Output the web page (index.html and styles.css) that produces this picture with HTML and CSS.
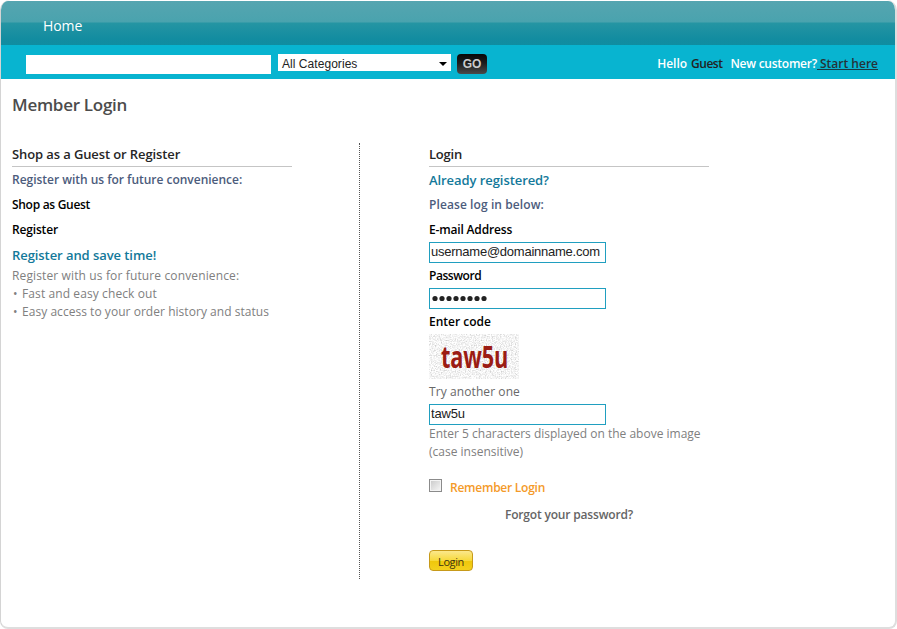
FILE: index.html
```
<!DOCTYPE html>
<html lang="en">
<head>
<meta charset="utf-8">
<title>Member Login</title>
<link rel="stylesheet" href="styles.css">
</head>
<body>
<div class="page">
  <header class="nav"><a class="home">Home</a></header>
  <div class="searchbar">
    <input class="search" type="text" aria-label="Search">
    <div class="category"><span>All Categories</span><svg width="8" height="4" viewBox="0 0 8 4"><path d="M0 0h8L4 4z" fill="#000"/></svg></div>
    <button class="go">GO</button>
    <div class="greeting"><span class="hello">Hello</span><span class="guest">Guest</span><span class="new">New customer?</span><a class="start">&nbsp;Start here</a></div>
  </div>
  <main>
    <h1>Member Login</h1>
    <div class="columns">
      <section class="left">
        <h2>Shop as a Guest or Register</h2>
        <p class="intro">Register with us for future convenience:</p>
        <a class="option shop">Shop as Guest</a>
        <a class="option reg">Register</a>
        <h3 class="save">Register and save time!</h3>
        <p class="note conv">Register with us for future convenience:</p>
        <ul>
          <li class="note fast">Fast and easy check out</li>
          <li class="note easy">Easy access to your order history and status</li>
        </ul>
      </section>
      <form class="right">
        <h2 class="login-title">Login</h2>
        <h3 class="already">Already registered?</h3>
        <p class="intro below">Please log in below:</p>
        <label class="email">E-mail Address</label>
        <input class="field user" type="text" value="username@domainname.com">
        <label class="pass">Password</label>
        <div class="field dots"><svg width="56" height="7" viewBox="0 0 56 7"><g fill="#222"><circle cx="3" cy="3.5" r="2.6"/><circle cx="10" cy="3.5" r="2.6"/><circle cx="17" cy="3.5" r="2.6"/><circle cx="24" cy="3.5" r="2.6"/><circle cx="31" cy="3.5" r="2.6"/><circle cx="38" cy="3.5" r="2.6"/><circle cx="45" cy="3.5" r="2.6"/><circle cx="52" cy="3.5" r="2.6"/></g></svg></div>
        <label class="code">Enter code</label>
        <div class="captcha">
          <svg width="90" height="45" viewBox="0 0 90 45">
            <filter id="noise" x="0" y="0" width="100%" height="100%"><feTurbulence type="fractalNoise" baseFrequency="0.8" numOctaves="2" seed="4"/><feColorMatrix values="0.8 0 0 0 0.5  0.8 0 0 0 0.5  0.8 0 0 0 0.5  0 0 0 0 1"/></filter>
            <rect width="90" height="45" filter="url(#noise)"/>
          </svg>
          <span>taw5u</span>
        </div>
        <a class="another">Try another one</a>
        <input class="field" type="text" value="taw5u">
        <p class="note hint">Enter 5 characters displayed on the above image<br>(case insensitive)</p>
        <div class="remember"><span class="box"></span><span class="label">Remember Login</span></div>
        <a class="forgot">Forgot your password?</a>
        <button class="submit" type="button">Login</button>
      </form>
    </div>
  </main>
</div>
</body>
</html>
```
FILE: styles.css
```
* { box-sizing: border-box; }
body { margin: 0; background: #fff; font: 12px/18px "Open Sans", sans-serif; color: #808080; }
h1, h2, h3, p, ul { margin: 0; padding: 0; font-size: inherit; }
.page { width: 897px; height: 629px; padding-top: 1px; border: solid #dedede; border-width: 0 2px 2px 1px; border-left-color: #d4d4d4; border-radius: 10px 10px 8px 8px; overflow: hidden; }
.nav { height: 44px; margin: 0 -1px; padding: 16px 0 0 43px; border-radius: 8px 8px 0 0; background: linear-gradient(#55a5b0 0, #4aa3ae 21px, #2595a3 22px, #128ca0 38px, #0f8da1); }
.home { display: block; color: #fff; font-size: 14px; letter-spacing: -0.1px; }
.searchbar { display: flex; align-items: flex-start; height: 34px; margin: 0 -1px; padding: 9px 18px 0 26px; background: #08b4d0; }
.search { width: 245px; height: 19px; margin-top: 1px; padding: 0; border: 0; background: #fff; }
.category { display: flex; align-items: center; justify-content: space-between; width: 173px; height: 17px; margin: 0 6px 0 7px; padding: 2px 4px 0 4px; background: #fff; color: #222; font: 12px "Liberation Sans", sans-serif; letter-spacing: 0.05px; }
.go { width: 30px; height: 20px; padding: 0; border: 0; border-radius: 4px; background: linear-gradient(#080808 0, #1c1c1c 45%, #4a4a4a); color: #ccc; font: bold 12px/21px "Liberation Sans", sans-serif; }
.greeting { display: flex; margin: 1px 0 0 auto; color: #fff; font-weight: 600; white-space: pre; }
.hello { margin-right: 4px; }
.guest { margin-right: 8px; color: #222; letter-spacing: -0.5px; }
.new { letter-spacing: -0.25px; }
.start { height: 15px; border-bottom: 1px solid #173c45; color: #253238; }
main { padding: 16px 0 0 11px; }
h1 { height: 48px; color: #4c4c4c; font-size: 17px; line-height: 20px; font-weight: 600; letter-spacing: -0.28px; }
.columns { display: flex; align-items: flex-start; }
.left { width: 348px; height: 436px; border-right: 1px dotted #555; }
.right { display: flex; flex-direction: column; align-items: flex-start; margin-left: 69px; width: 290px; }
.left, .right { padding-top: 2px; }
.intro, .option, .note, .another, .forgot, label { margin-bottom: -1px; padding-top: 1px; }
h2 { width: 280px; height: 22px; border-bottom: 1px solid #c5c5c5; color: #262626; font-size: 13px; font-weight: 600; letter-spacing: -0.11px; }
.login-title { letter-spacing: -0.2px; }
.intro { margin-top: 3px; color: #4c5c7c; font-weight: 600; letter-spacing: -0.02px; }
.below { margin-top: 6px; letter-spacing: 0.09px; }
.option { display: block; margin-top: 7px; color: #000; font-weight: 600; letter-spacing: -0.16px; }
.shop { letter-spacing: -0.3px; }
h3 { color: #13799a; font-size: 13px; font-weight: 600; letter-spacing: -0.07px; }
.save { margin: 8px 0 2px; }
.already { margin-top: 4px; }
.conv { letter-spacing: 0.13px; }
ul { list-style: none; }
li { display: flex; }
li::before { content: "•"; width: 9px; margin-left: 1px; font-size: 12px; }
.fast { letter-spacing: 0.1px; }
.easy { letter-spacing: 0.04px; }
label { color: #000; font-weight: 600; }
.email { margin-top: 7px; letter-spacing: -0.17px; }
.pass, .code { margin-top: 3px; }
.pass { letter-spacing: -0.45px; }
.field { display: flex; align-items: center; width: 177px; height: 21px; margin: 4px 0 0; padding: 0 1px 2px; border: 1px solid #209fc0; background: #fff; color: #222; font: 13px "Liberation Sans", sans-serif; letter-spacing: -0.2px; }
.user { letter-spacing: -0.24px; }
.dots { padding: 0 0 0 2px; }
.captcha { display: grid; width: 90px; height: 45px; margin-top: 4px; place-items: center; }
.captcha > * { grid-area: 1 / 1; }
.captcha svg { display: block; }
.captcha span { color: #9b1c14; font: 700 25px/34px "Open Sans", sans-serif; letter-spacing: -0.2px; transform: translate(1px, -1px) scale(0.87, 1.2); }
.another { margin-top: 3px; color: #686868; letter-spacing: 0.09px; }
.hint { margin-top: -1px; white-space: nowrap; }
.remember { display: flex; margin-top: 18px; color: #f49a28; font-weight: 600; letter-spacing: -0.25px; }
.label { height: 19px; margin-bottom: -1px; padding-top: 1px; }
.box { width: 13px; height: 13px; margin: 1px 8px 0 0; border: 1px solid #8b8b8b; background: linear-gradient(135deg, #c8c8c8, #f8f8f8); box-shadow: inset 0 0 0 1px #f4f4f4; }
.forgot { margin: 9px 0 -1px 76px; color: #656565; font-weight: 600; letter-spacing: -0.18px; }
.submit { width: 44px; height: 21px; margin: 27px 0 0; padding: 2px 0 0; border: 1px solid #c79a1a; border-radius: 4px; background: linear-gradient(#fbe88c, #f7d93c 50%, #efc70c 55%, #f3d01e); color: #3c3410; font: 11px/15px "Open Sans", sans-serif; letter-spacing: -0.4px; }
```
